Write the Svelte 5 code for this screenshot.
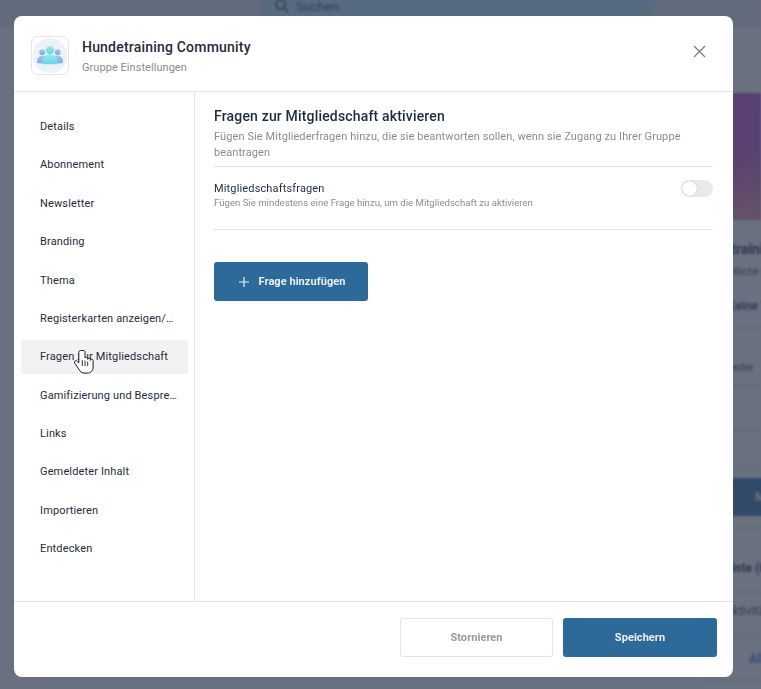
<script>
  const navItems = [
    'Details',
    'Abonnement',
    'Newsletter',
    'Branding',
    'Thema',
    'Registerkarten anzeigen/ausblenden',
    'Fragen zur Mitgliedschaft',
    'Gamifizierung und Besprechungen',
    'Links',
    'Gemeldeter Inhalt',
    'Importieren',
    'Entdecken'
  ];
  const activeItem = 'Fragen zur Mitgliedschaft';

  // Row separators of the page behind the dialog
  const bgLines = [327, 385, 430, 468, 527, 592, 635, 680];
</script>

<div class="page">
  <!-- Blurred page behind the dialog -->
  <div class="backdrop" aria-hidden="true">
    <div class="search">
      <svg width="14" height="14" viewBox="0 0 14 14">
        <circle cx="5.500" cy="5.500" r="4.500" fill="none" stroke="#33445c" stroke-width="1.600" />
        <path d="M9 9l4 4" stroke="#33445c" stroke-width="1.600" />
      </svg>
      <span>Suchen</span>
    </div>
    <div class="topbar"></div>
    <div class="topline"></div>
    <div class="banner"></div>
    {#each bgLines as y}
      <div class="bg-line" style="top: {y}px"></div>
    {/each}
    <div class="bg-text bg-title">Hundetraining</div>
    <div class="bg-text bg-sub">Öffentliche Gruppe</div>
    <div class="bg-text bg-tab">Keine Themen</div>
    <div class="bg-text bg-members">Mitglieder</div>
    <div class="bg-btn">Mitglied</div>
    <div class="bg-text bg-list">Warteliste (0)</div>
    <div class="bg-text bg-act">Aktivität</div>
    <div class="bg-text bg-all">Alle</div>
  </div>
  <div class="scrim"></div>

  <div class="dialog">
    <header class="head">
      <div class="logo">
        <svg width="32" height="24" viewBox="0 0 32 24">
          <defs>
            <linearGradient id="side" x1="0" y1="0" x2="0" y2="1">
              <stop offset="0" stop-color="#a4c8f0" />
              <stop offset="1" stop-color="#7fa9e6" />
            </linearGradient>
            <linearGradient id="mid" x1="0" y1="0" x2="0" y2="1">
              <stop offset="0" stop-color="#98ecf0" />
              <stop offset="1" stop-color="#6bd3e6" />
            </linearGradient>
          </defs>
          <circle cx="6.500" cy="8.500" r="3.600" fill="url(#side)" />
          <circle cx="25.500" cy="8.500" r="3.600" fill="url(#side)" />
          <path d="M0 21c0-5 2.500-8.500 6.500-8.500s6.500 3.500 6.500 8.500c0 .7-.4 1-1 1H1c-.6 0-1-.3-1-1z" fill="url(#side)" />
          <path d="M19 21c0-5 2.500-8.500 6.500-8.500s6.500 3.500 6.500 8.500c0 .7-.4 1-1 1H20c-.6 0-1-.3-1-1z" fill="url(#side)" />
          <circle cx="16" cy="6" r="5.200" fill="url(#mid)" />
          <path d="M6.500 21c0-6 3.500-10 9.500-10s9.500 4 9.500 10c0 1.500-.6 2.500-2 2.500h-15c-1.400 0-2-1-2-2.500z" fill="url(#mid)" />
        </svg>
      </div>
      <div class="head-text">
        <h1>Hundetraining Community</h1>
        <p>Gruppe Einstellungen</p>
      </div>
      <button class="close" aria-label="Schließen">
        <svg width="13" height="13" viewBox="0 0 13 13">
          <path d="M1 1l11 11M12 1L1 12" stroke="#777a82" stroke-width="1.200" fill="none" />
        </svg>
      </button>
    </header>

    <div class="body">
      <nav class="side">
        {#each navItems as item}
          <div class="nav-item" class:active={item === activeItem}><span>{item}</span></div>
        {/each}
      </nav>

      <main class="content">
        <h2>Fragen zur Mitgliedschaft aktivieren</h2>
        <p class="lead">Fügen Sie Mitgliederfragen hinzu, die sie beantworten sollen, wenn sie Zugang zu Ihrer Gruppe beantragen</p>

        <div class="setting">
          <div>
            <div class="setting-name">Mitgliedschaftsfragen</div>
            <div class="setting-hint">Fügen Sie mindestens eine Frage hinzu, um die Mitgliedschaft zu aktivieren</div>
          </div>
          <div class="toggle"><div class="knob"></div></div>
        </div>

        <button class="btn primary add">
          <svg width="10" height="10" viewBox="0 0 10 10">
            <path d="M5 0v10M0 5h10" stroke="#eaf1f7" stroke-width="1.200" fill="none" />
          </svg>
          Frage hinzufügen
        </button>
      </main>
    </div>

    <footer class="foot">
      <button class="btn cancel">Stornieren</button>
      <button class="btn primary save">Speichern</button>
    </footer>
  </div>

  <!-- Mouse pointer -->
  <svg class="pointer" width="20" height="26" viewBox="0 0 20 26">
    <path d="M6.500 1.500c-1 0-1.700.8-1.700 1.800V14l-1.600-1.700c-.8-.8-2-.8-2.600 0-.4.5-.3 1.200.1 1.800l3.400 5c1.300 2 2.800 5 6 5h3c3.500 0 6-2 6-6v-6.400c0-1-.7-1.500-1.400-1.500s-1.300.5-1.300 1.200v-.7c0-1-.7-1.500-1.400-1.500s-1.300.4-1.300 1.100v-.5c0-1-.7-1.500-1.400-1.500-.6 0-1 .3-1.300.7V3.300c0-1-.7-1.800-1.500-1.800z" fill="#fff" stroke="#1a1a1a" stroke-width="1" stroke-linejoin="round" />
    <path d="M8.300 11v6M11 11.500v5.500M13.700 12.500v4.500" stroke="#1a1a1a" stroke-width=".9" fill="none" />
  </svg>
</div>

<style>
  :global(body) {
    margin: 0;
    font-family: Roboto, "Liberation Sans", sans-serif;
  }

  .page {
    position: relative;
    width: 761px;
    height: 689px;
    overflow: hidden;
    background: #fff;
    padding: 16px 28px 12px 14px;
    box-sizing: border-box;
  }

  .backdrop {
    position: absolute;
    inset: 0;
    filter: blur(1px);
    background: #fff;
  }

  .scrim {
    position: absolute;
    inset: 0;
    background: rgba(52, 64, 84, 0.74);
  }

  .search {
    position: absolute;
    left: 260px;
    top: -16px;
    display: flex;
    align-items: center;
    gap: 7px;
    width: 395px;
    height: 32px;
    box-sizing: border-box;
    padding: 12px 0 0 15px;
    border-radius: 8px;
    background: #b4e4ff;
    color: #33445c;
    font-size: 13px;
    z-index: 1;
  }

  .topbar {
    position: absolute;
    left: 0;
    right: 0;
    top: 0;
    height: 28px;
    background: #e4e7ea;
  }

  .topline {
    position: absolute;
    left: 0;
    right: 0;
    top: 76px;
    border-top: 1px solid #dfe2e6;
  }

  .banner {
    position: absolute;
    left: 700px;
    top: 93px;
    width: 61px;
    height: 127px;
    background: linear-gradient(175deg, #c044cc 0%, #c448cb 50%, #f58a98 100%);
  }

  .bg-line {
    position: absolute;
    left: 700px;
    right: 0;
    border-top: 1px solid #d6d9de;
  }

  .bg-text {
    position: absolute;
    color: #0e1a2a;
    white-space: nowrap;
  }

  .bg-title { left: 690px; top: 241px; font-size: 14px; font-weight: 700; }
  .bg-sub { left: 710px; top: 266px; font-size: 10px; color: #333; }
  .bg-tab { left: 728px; top: 299px; font-size: 12px; font-weight: 500; }
  .bg-members { left: 705px; top: 361px; font-size: 11px; color: #333; }
  .bg-list { left: 697px; top: 561px; font-size: 12px; font-weight: 700; }
  .bg-act { left: 725px; top: 604px; font-size: 12px; color: #333; }
  .bg-all { left: 749px; top: 652px; font-size: 12px; font-weight: 700; color: #3f6fd8; }

  .bg-btn {
    position: absolute;
    left: 660px;
    top: 478px;
    width: 160px;
    height: 38px;
    background: #2a6ca8;
    color: #fff;
    font-size: 12px;
    font-weight: 700;
    line-height: 38px;
    padding-left: 95px;
    box-sizing: border-box;
  }

  .dialog {
    position: relative;
    display: flex;
    flex-direction: column;
    width: 719px;
    height: 661px;
    background: #fff;
    border-radius: 8px;
    overflow: hidden;
  }

  .head {
    display: flex;
    align-items: center;
    flex: none;
    height: 71px;
    padding: 4px 27px 0 17px;
    border-bottom: 1px solid #e4e4e4;
  }

  .logo {
    display: flex;
    align-items: center;
    justify-content: center;
    flex: none;
    width: 38px;
    height: 39px;
    box-sizing: border-box;
    border: 1px solid #e4e4e4;
    border-radius: 7px;
    background: radial-gradient(circle, #eef1f7 0 17px, #fff 18px);
  }

  .logo svg {
    width: 26px;
    height: 20px;
    margin-top: -2px;
  }

  .head-text {
    flex: 1;
    margin: 2px 0 0 13px;
  }

  h1 {
    margin: 0;
    font-size: 14px;
    line-height: 18px;
    font-weight: 500;
    letter-spacing: .2px;
    color: #1f2b3d;
  }

  .head-text p {
    margin: 5px 0 0;
    font-size: 11px;
    line-height: 14px;
    letter-spacing: .05px;
    color: #8b8b8b;
  }

  .close {
    display: flex;
    margin-top: -8px;
    padding: 0;
    border: 0;
    background: none;
  }

  .body {
    display: flex;
    flex: 1;
    min-height: 0;
  }

  .side {
    display: flex;
    flex-direction: column;
    gap: 4.380px;
    flex: none;
    width: 181px;
    box-sizing: border-box;
    padding: 18px 6px 0 7px;
    border-right: 1px solid #e4e4e4;
  }

  .nav-item {
    flex: none;
    height: 34px;
    padding: 0 11px 0 19px;
    border-radius: 3px;
    font-size: 11px;
    line-height: 34px;
    letter-spacing: .14px;
    color: #1f2b3d;
  }

  .nav-item span {
    display: block;
    overflow: hidden;
    white-space: nowrap;
    text-overflow: ellipsis;
  }

  .nav-item.active {
    background: #f2f2f2;
  }

  .content {
    flex: 1;
    padding: 15px 20px 0 19px;
  }

  h2 {
    margin: 0;
    font-size: 14px;
    line-height: 18px;
    font-weight: 500;
    letter-spacing: .17px;
    color: #1f2b3d;
  }

  .lead {
    margin: 4px 0 0;
    padding-bottom: 5px;
    border-bottom: 1px solid #e4e4e4;
    font-size: 11px;
    line-height: 16px;
    letter-spacing: .09px;
    color: #8b8b8b;
  }

  .setting {
    display: flex;
    justify-content: space-between;
    height: 63px;
    box-sizing: border-box;
    padding-top: 15px;
    border-bottom: 1px solid #e4e4e4;
  }

  .setting-name {
    font-size: 11px;
    line-height: 14px;
    letter-spacing: .15px;
    color: #1f2b3d;
  }

  .setting-hint {
    font-size: 9.600px;
    line-height: 13px;
    color: #8b8b8b;
  }

  .toggle {
    width: 32px;
    height: 17px;
    margin-top: -2px;
    border-radius: 9px;
    background: #e9e9e9;
  }

  .knob {
    width: 15px;
    height: 15px;
    margin: 1px;
    border-radius: 50%;
    background: #fff;
    box-shadow: 0 0 1px rgba(0, 0, 0, .4);
  }

  .btn {
    height: 39px;
    box-sizing: border-box;
    border-radius: 3px;
    font-family: inherit;
    font-size: 11px;
    font-weight: 700;
    letter-spacing: .05px;
  }

  .primary {
    border: 0;
    background: #2e6a99;
    color: #e8f0f6;
  }

  .add {
    display: flex;
    align-items: center;
    justify-content: center;
    gap: 10px;
    width: 154px;
    margin-top: 32px;
    padding: 0 0 0 2px;
  }

  .foot {
    display: flex;
    justify-content: flex-end;
    gap: 10px;
    flex: none;
    height: 76px;
    box-sizing: border-box;
    padding: 16px 16px 0 0;
    border-top: 1px solid #e4e4e4;
  }

  .cancel {
    width: 153px;
    border: 1px solid #e4e4e4;
    background: #fff;
    color: #999;
  }

  .save {
    width: 154px;
  }

  .pointer {
    position: absolute;
    left: 74px;
    top: 349px;
  }
</style>
